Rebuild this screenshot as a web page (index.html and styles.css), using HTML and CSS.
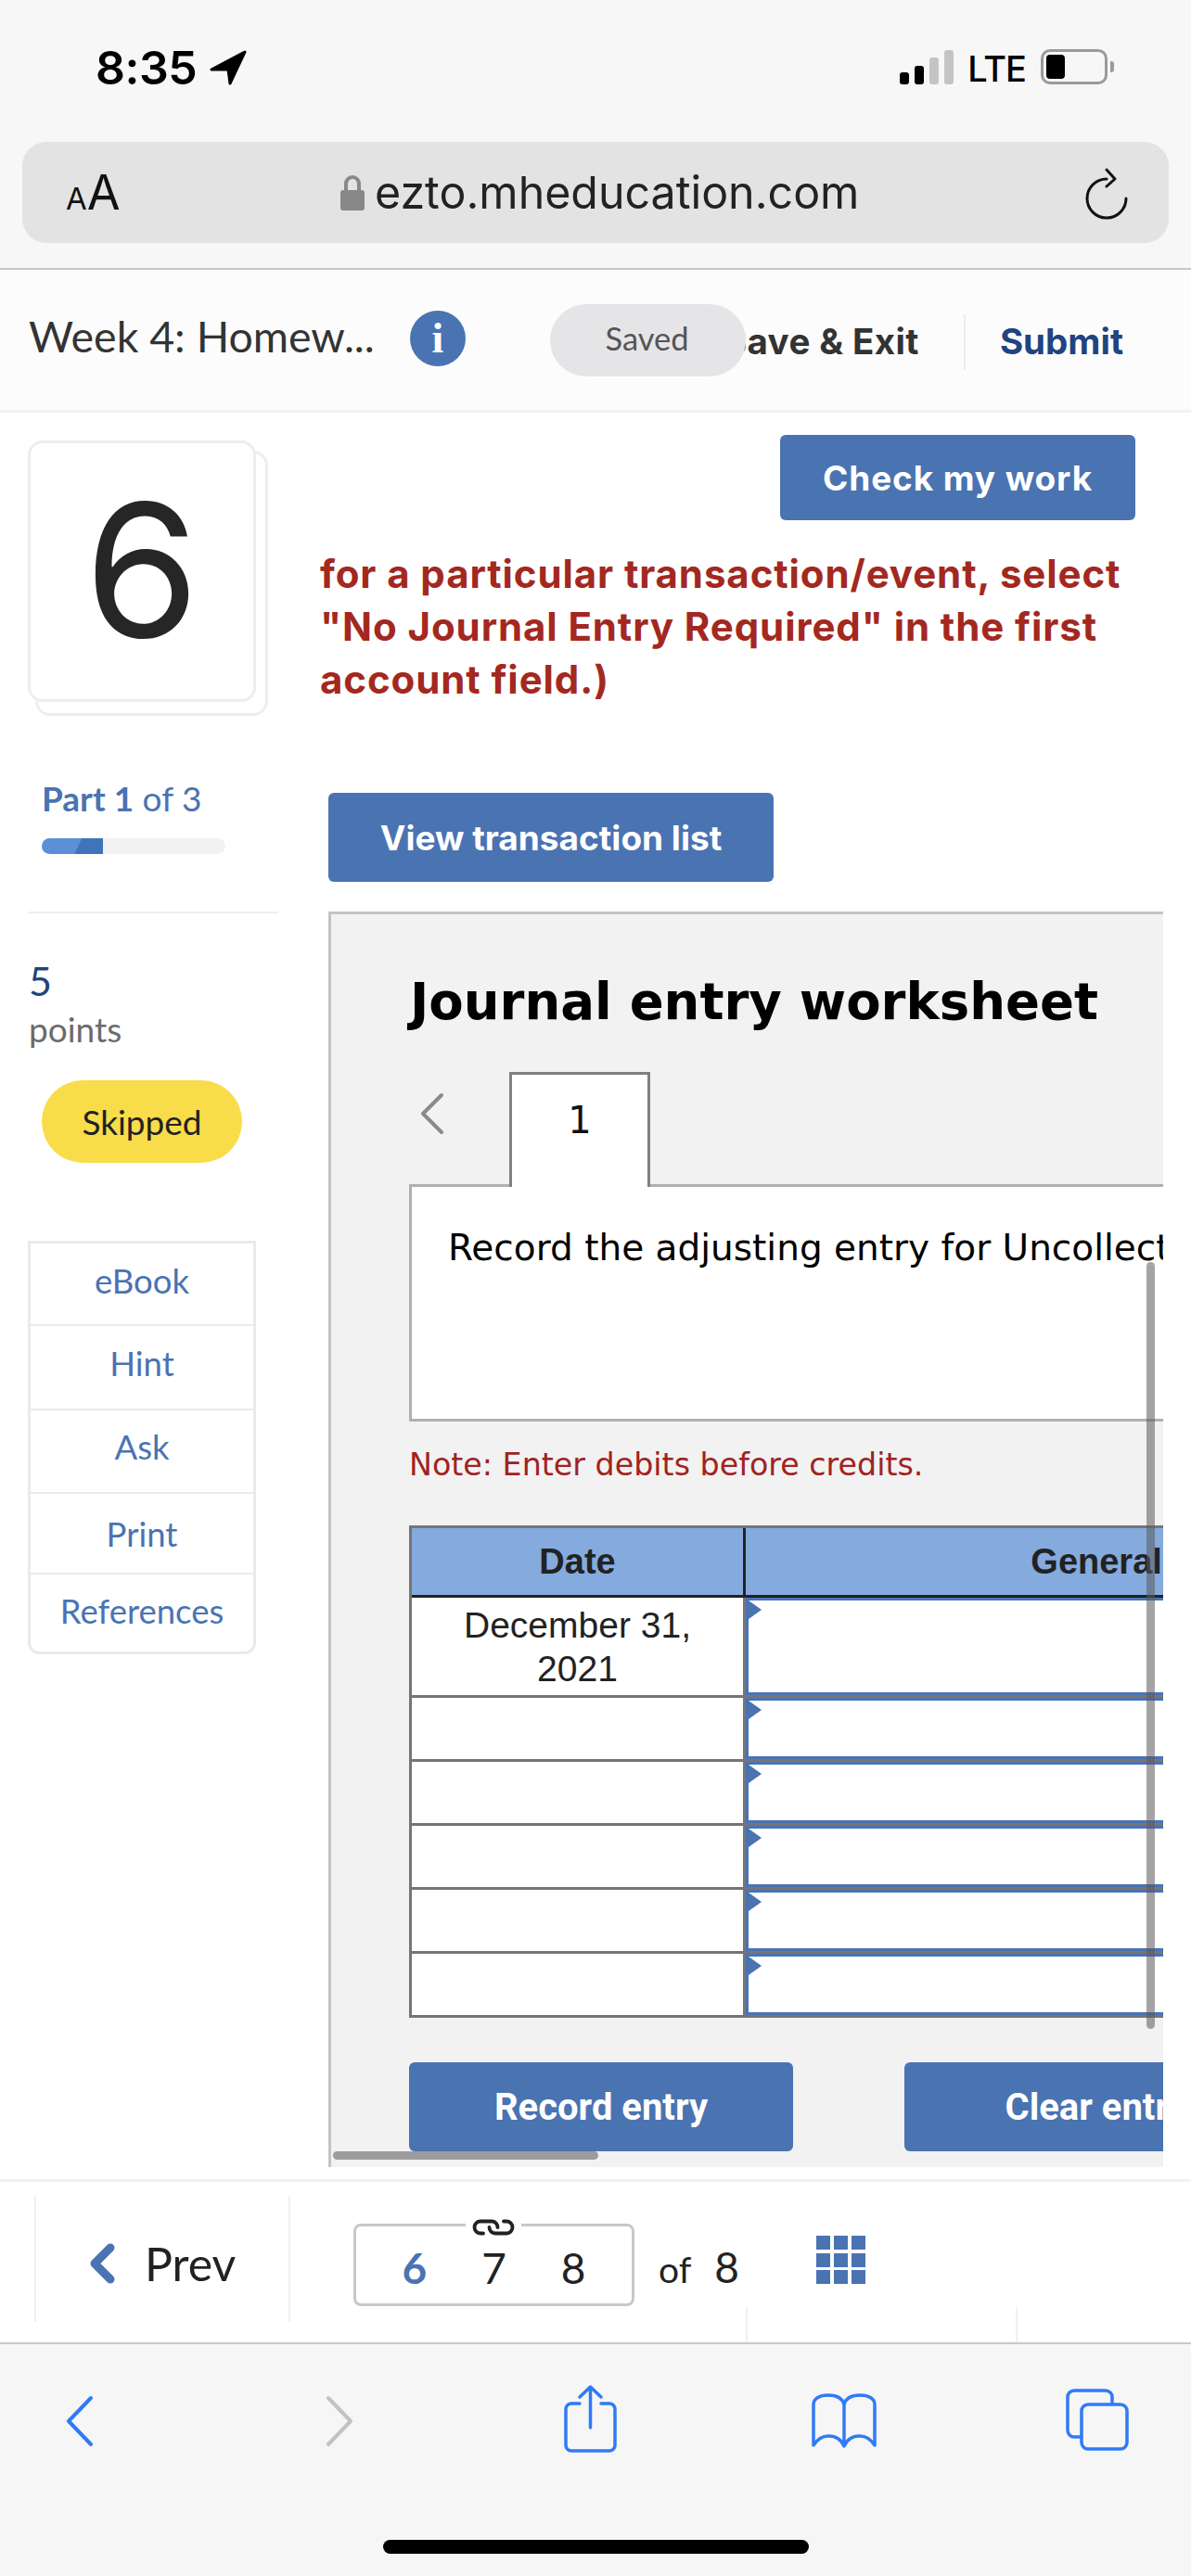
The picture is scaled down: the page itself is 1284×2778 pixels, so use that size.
FILE: index.html
```html
<!DOCTYPE html>
<html lang="en">
<head>
<meta charset="utf-8">
<title>Week 4: Homework</title>
<link rel="stylesheet" href="styles.css">
</head>
<body>
<div class="page">
  <header class="chrome">
    <div class="status">
      <div class="status-left">
        <span class="clock">8:35</span>
        <svg class="loc" viewBox="0 0 40 38"><path d="M38 2L2 21h18l2 15z" stroke="#000" stroke-width="3" stroke-linejoin="round"/></svg>
      </div>
      <div class="status-right">
        <div class="signal"><i class="b1"></i><i class="b2"></i><i class="b3"></i><i class="b4"></i></div>
        <span class="lte">LTE</span>
        <div class="battery"><i></i></div>
        <div class="nub"></div>
      </div>
    </div>
    <div class="urlbar">
      <span class="aa"><small>A</small>A</span>
      <div class="url">
        <svg class="lock" viewBox="0 0 26 38"><path d="M6 18V9a7 7 0 0 1 14 0v9" fill="none" stroke="#888" stroke-width="4"/><rect y="16" width="26" height="22" rx="3" fill="#888"/></svg>
        <span class="urltext">ezto.mheducation.com</span>
      </div>
      <svg class="reload" viewBox="0 0 46 56"><path d="M23 12A21 21 0 1 0 44 33" fill="none" stroke="#111" stroke-width="3" stroke-linecap="round"/><path d="M23 2l9 10-9 8" fill="none" stroke="#111" stroke-width="3" stroke-linecap="round" stroke-linejoin="round"/></svg>
    </div>
  </header>

  <div class="apphead">
    <span class="apptitle">Week 4: Homew...</span>
    <span class="info">i</span>
    <div class="actions">
      <span class="save">Save &amp; Exit</span>
      <span class="vsep"></span>
      <span class="submit">Submit</span>
    </div>
    <span class="saved">Saved</span>
  </div>

  <div class="content">
    <aside class="side">
      <div class="qcard"><span>6</span></div>
      <div class="part"><b>Part 1</b> of 3</div>
      <div class="progress"><div class="fill"></div></div>
      <div class="hr"></div>
      <div class="pts">5</div>
      <div class="ptslabel">points</div>
      <div class="skipped">Skipped</div>
      <nav class="tools">
        <a>eBook</a>
        <a>Hint</a>
        <a>Ask</a>
        <a>Print</a>
        <a>References</a>
      </nav>
    </aside>
    <main class="main">
      <div class="checkrow"><button class="btn check">Check my work</button></div>
      <p class="instr">for a particular transaction/event, select<br>"No Journal Entry Required" in the first<br>account field.)</p>
      <button class="btn view">View transaction list</button>
      <section class="panel">
        <h2>Journal entry worksheet</h2>
        <div class="tabs">
          <svg class="tabprev" viewBox="0 0 28 46"><path d="M24 3L4 23l20 20" fill="none" stroke="#8a8a8a" stroke-width="4" stroke-linecap="round" stroke-linejoin="round"/></svg>
          <div class="tab">1</div>
        </div>
        <div class="taskbox">Record the adjusting entry for Uncollectible Accounts.</div>
        <p class="note">Note: Enter debits before credits.</p>
        <table class="sheet">
          <thead><tr><th class="cdate">Date</th><th class="cacct">General Journal</th></tr></thead>
          <tbody>
            <tr class="first"><td class="cdate">December 31,<br>2021</td><td class="acct"><div class="field"></div></td></tr>
            <tr><td class="cdate"></td><td class="acct"><div class="field"></div></td></tr>
            <tr><td class="cdate"></td><td class="acct"><div class="field"></div></td></tr>
            <tr><td class="cdate"></td><td class="acct"><div class="field"></div></td></tr>
            <tr><td class="cdate"></td><td class="acct"><div class="field"></div></td></tr>
            <tr><td class="cdate"></td><td class="acct"><div class="field"></div></td></tr>
          </tbody>
        </table>
        <div class="entrybtns">
          <button class="btn entry">Record entry</button>
          <button class="btn entry">Clear entry</button>
        </div>
        <div class="vscroll"></div>
        <div class="hscroll"></div>
      </section>
    </main>
  </div>

  <footer class="pager">
    <div class="prevcell">
      <svg class="prevchev" viewBox="0 0 30 44"><path d="M24 5L7 22l17 17" fill="none" stroke="#4a73b2" stroke-width="9" stroke-linecap="round" stroke-linejoin="round"/></svg>
      <span>Prev</span>
    </div>
    <div class="pagebox">
      <svg class="link" viewBox="0 0 48 19"><path d="M13 16H10a6.500 6.500 0 0 1 0-13h12a6.500 6.500 0 0 1 6.500 6.500M35 3h3a6.500 6.500 0 0 1 0 13H26a6.500 6.500 0 0 1-6.500-6.500" fill="none" stroke="#222" stroke-width="3.800" stroke-linecap="round"/></svg>
      <b>6</b><span>7</span><span>8</span>
    </div>
    <div class="ofn"><small>of</small> 8</div>
    <div class="grid"><i></i><i></i><i></i><i></i><i></i><i></i><i></i><i></i><i></i></div>
    <span class="stub s1"></span>
    <span class="stub s2"></span>
  </footer>

  <div class="toolbar">
    <div class="tbicons">
      <svg class="i-back" viewBox="0 0 32 56"><path d="M28 3L4 28l24 25" fill="none" stroke="#2f7bf6" stroke-width="4" stroke-linecap="round" stroke-linejoin="round"/></svg>
      <svg class="i-fwd" viewBox="0 0 32 56"><path d="M4 3l24 25L4 53" fill="none" stroke="#c2c2c2" stroke-width="4" stroke-linecap="round" stroke-linejoin="round"/></svg>
      <svg class="i-share" viewBox="0 0 57 74"><path d="M17 21H8a6 6 0 0 0-6 6v39a6 6 0 0 0 6 6h41a6 6 0 0 0 6-6V27a6 6 0 0 0-6-6h-9M28.500 47V3M17 14L28.500 3 40 14" fill="none" stroke="#2f7bf6" stroke-width="3.500" stroke-linecap="round" stroke-linejoin="round"/></svg>
      <svg class="i-book" viewBox="0 0 70 60"><path d="M35 12C33 5 26 2 18 2 8 2 2 6 2 12v44c4-6 10-10 16-10 8 0 14 4 17 11 3-7 9-11 17-11 6 0 12 4 16 10V12c0-6-6-10-16-10-8 0-15 3-17 10v45" fill="none" stroke="#2f7bf6" stroke-width="3.500" stroke-linejoin="round"/></svg>
      <svg class="i-tabs" viewBox="0 0 68 67"><path d="M16 52H9a7 7 0 0 1-7-7V9a7 7 0 0 1 7-7h34a7 7 0 0 1 7 7v7" fill="none" stroke="#2f7bf6" stroke-width="3.500"/><rect x="17" y="17" width="49" height="48" rx="7" fill="none" stroke="#2f7bf6" stroke-width="3.500"/></svg>
    </div>
    <div class="home"></div>
  </div>
</div>
</body>
</html>
```
FILE: styles.css
```css
* { box-sizing: border-box; }
html, body { margin: 0; padding: 0; background: #fff; }
.page { width: 1284px; height: 2778px; overflow: hidden; display: flex; flex-direction: column; font-family: "Lato", "Open Sans", sans-serif; color: #222; position: relative; }

/* browser chrome */
.chrome { height: 291px; background: #f7f7f7; border-bottom: 2px solid #c8c8c8; flex: none; }
.status { height: 153px; display: flex; justify-content: space-between; padding: 48px 83px 0 103px; }
.status-left { display: flex; align-items: flex-start; gap: 14px; }
.clock { font: 600 50px/50px "Inter", sans-serif; color: #000; letter-spacing: -.5px; }
.loc { width: 40px; height: 38px; margin-top: 6px; }
.status-right { display: flex; align-items: flex-start; }
.signal { display: flex; align-items: flex-end; gap: 6px; height: 37px; margin-top: 6px; }
.signal i { display: block; width: 10px; background: #c4c4c4; border-radius: 3px; }
.signal .b1 { height: 13px; background: #000; }
.signal .b2 { height: 20px; background: #000; }
.signal .b3 { height: 29px; }
.signal .b4 { height: 37px; }
.lte { font: 500 38px/40px "Inter", sans-serif; color: #000; margin: 6px 16px 0 15px; letter-spacing: -1px; }
.battery { width: 72px; height: 38px; margin-top: 5px; border: 3px solid #9a9a9a; border-radius: 10px; padding: 3px; }
.battery i { display: block; width: 20px; height: 100%; background: #000; border-radius: 4px; }
.nub { width: 4px; height: 12px; margin: 18px 0 0 3px; background: #9a9a9a; border-radius: 0 3px 3px 0; }
.urlbar { height: 109px; margin: 0 24px; background: #e3e3e3; border-radius: 26px; display: flex; align-items: center; position: relative; padding: 0 44px 0 47px; }
.aa { font: 400 52px/1 "Inter", sans-serif; color: #111; width: 296px; }
.aa small { font-size: 33px; }
.url { display: flex; align-items: center; gap: 11px; flex: 1; font: 400 48.300px/1 "Inter", sans-serif; color: #222; }
.urltext { margin-top: 2px; }
.lock { width: 26px; height: 38px; margin-top: 2px; }
.reload { width: 46px; height: 56px; margin-top: 2px; }

/* app header */
.apphead { height: 154px; flex: none; background: #fcfcfc; border-bottom: 3px solid #f2f2f2; display: flex; align-items: center; padding: 0 73px 0 31px; position: relative; }
.apptitle { font-size: 46.500px; color: #333; margin-top: -10px; width: 373px; white-space: nowrap; }
.info { width: 60px; height: 60px; border-radius: 50%; background: #4a73b2; color: #fff; font: 700 46px/60px "Liberation Serif", serif; text-align: center; margin: -4px 0 0 38px; }
.actions { margin: 4px 0 0 auto; display: flex; align-items: center; }
.save { font: 700 38.500px/1.2 "Inter", sans-serif; letter-spacing: .4px; color: #333; }
.vsep { width: 2px; height: 60px; background: #ececec; margin: 0 37px 0 48px; }
.submit { font: 700 38.500px/1.2 "Inter", sans-serif; color: #1f4480; }
.saved { position: absolute; left: 593px; top: 37px; width: 211px; height: 78px; padding: 0 2px 5px 0; border-radius: 39px; background: #e5e5e8; color: #555; font-size: 34.500px; display: flex; align-items: center; justify-content: center; }

/* content */
.content { height: 1905px; flex: none; display: flex; overflow: hidden; background: #fff; }
.side { width: 345px; flex: none; padding: 30px 0 0 30px; }
.qcard { width: 246px; height: 282px; background: #fff; border: 3px solid #eee; border-radius: 16px; position: relative; display: flex; align-items: center; justify-content: center; font: 400 200px/1 "Inter", sans-serif; color: #262626; }
.qcard::before { content: ""; position: absolute; left: 5px; top: 8px; width: 251px; height: 286px; box-sizing: border-box; border: 3px solid #eee; border-radius: 16px; z-index: 0; }
.qcard::after { content: ""; position: absolute; inset: -3px; background: #fff; border: 3px solid #eee; border-radius: 16px; z-index: 1; }
.qcard span { position: relative; z-index: 2; margin-top: -4px; }
.part { margin: 84px 0 0 15px; font-size: 37px; line-height: 40px; color: #4a73b2; }
.progress { width: 198px; height: 17px; margin: 23px 0 0 15px; background: #f2f2f2; border-radius: 9px; overflow: hidden; }
.fill { width: 66px; height: 100%; background: linear-gradient(115deg, #5b90d6 0 58%, #3f74b9 59%); }
.hr { width: 270px; height: 2px; background: #eee; margin-top: 62px; }
.pts { margin: 51px 0 0 1px; font-size: 43px; line-height: 44px; color: #1f4480; }
.ptslabel { margin: 10px 0 0 1px; font-size: 37px; line-height: 40px; color: #6b6b6b; }
.skipped { width: 216px; height: 89px; margin: 35px 0 0 15px; border-radius: 45px; background: #f9dc4a; font-size: 37px; color: #222; display: flex; align-items: center; justify-content: center; }
.tools { width: 246px; margin-top: 84px; border: 3px solid #eaeaea; border-radius: 0 0 12px 12px; display: flex; flex-direction: column; }
.tools a { display: flex; align-items: center; justify-content: center; color: #4a73b2; font-size: 36.500px; border-bottom: 2px solid #eaeaea; }
.tools a:nth-child(1) { height: 89px; padding-bottom: 8px; }
.tools a:nth-child(2) { height: 91px; padding-bottom: 10px; }
.tools a:nth-child(3) { height: 90px; padding-bottom: 10px; }
.tools a:nth-child(4) { height: 87px; }
.tools a:nth-child(5) { height: 83px; border-bottom: 0; padding-bottom: 5px; }

.main { flex: 1; min-width: 0; position: relative; }
.checkrow { display: flex; justify-content: flex-end; padding: 24px 60px 0 0; }
.btn { border: 0; background: #4a73b2; color: #fff; border-radius: 6px; font: 700 37px/1 "Inter", sans-serif; }
.check { width: 383px; height: 92px; letter-spacing: .9px; }
.instr { margin: 29px 0 0; font: 700 42px/57px "Inter", sans-serif; letter-spacing: .9px; color: #a32820; white-space: nowrap; }
.view { display: block; width: 480px; height: 96px; margin: 94px 0 0 9px; }
.panel { position: relative; width: 900px; height: 1354px; margin: 32px 0 0 9px; border: 3px solid #c4c4c4; border-width: 3px 0 0 3px; background: #f2f2f2; overflow: hidden; padding: 0 0 0 84px; }
.panel h2 { margin: 59px 0 0 1px; font: 700 54.500px/70px "DejaVu Sans", sans-serif; color: #000; white-space: nowrap; }
.tabs { display: flex; align-items: flex-start; height: 121px; margin-top: 41px; }
.tabprev { width: 28px; height: 46px; margin: 22px 0 0 11px; }
.tab { width: 152px; height: 124px; margin-left: 69px; background: #fff; border: 3px solid #808080; border-bottom: 0; text-align: center; font: 400 40px/98px "DejaVu Sans", sans-serif; color: #111; position: relative; z-index: 1; }
.taskbox { width: 1200px; height: 256px; background: #fff; border: 3px solid #b0b0b0; padding: 36px 0 0 39px; font: 400 39px/60px "DejaVu Sans", sans-serif; color: #000; white-space: nowrap; }
.note { margin: 23px 0 0; font: 400 33.300px/48px "DejaVu Sans", sans-serif; color: #a0231f; }
.sheet { margin-top: 41px; width: 1267px; table-layout: fixed; border-collapse: separate; border-spacing: 0; border: 3px solid #757575; border-width: 3px 0 0 3px; font-family: "Liberation Sans", sans-serif; }
.sheet th { height: 75px; background: #84aade; border-bottom: 3px solid #222; font-size: 38px; color: #222; padding: 0; }
.sheet th.cdate { border-right: 3px solid #222; width: 360px; }
.sheet td { height: 69px; background: #fff; border-bottom: 3px solid #757575; padding: 0; font-size: 39px; line-height: 47px; color: #222; text-align: center; }
.sheet tr.first td { height: 108px; }
.sheet td.cdate { border-right: 3px solid #757575; }
.sheet td.acct { position: relative; }
.field { position: absolute; inset: 0; border: 3px solid #4a73b2; border-right: 0; background: #fff; }
.field::before { content: ""; position: absolute; left: 0; top: 0; border-left: 14px solid #4a73b2; border-top: 10px solid transparent; border-bottom: 10px solid transparent; }
.entrybtns { display: flex; gap: 120px; margin-top: 48px; width: 1200px; }
.entry { width: 414px; height: 96px; flex: none; padding-top: 3px; font: 700 40px/1 "Roboto", sans-serif; }
.vscroll { position: absolute; left: 879px; top: 375px; width: 9px; height: 827px; background: rgba(90,90,90,.55); border-radius: 5px; }
.hscroll { position: absolute; left: 2px; top: 1334px; width: 286px; height: 9px; background: #9c9c9c; border-radius: 5px; }

/* pager */
.pager { height: 178px; flex: none; background: #fff; border-top: 3px solid #f2f2f2; border-bottom: 2px solid #c8c8c8; display: flex; align-items: flex-start; position: relative; }
.prevcell { width: 276px; height: 136px; margin: 15px 0 0 37px; border-left: 2px solid #f0f0f0; border-right: 2px solid #f0f0f0; display: flex; align-items: center; padding: 10px 0 0 56px; gap: 31px; font-size: 50px; color: #222; }
.prevchev { width: 30px; height: 44px; }
.pagebox { position: relative; width: 303px; height: 89px; margin: 45px 0 0 68px; border: 3px solid #c8c8c8; border-radius: 8px; display: flex; align-items: center; justify-content: space-around; padding: 6px 20px 0; font-size: 46px; color: #222; }
.pagebox b { color: #4a73b2; }
.link { position: absolute; left: 118px; top: -9px; width: 60px; height: 20px; background: #fff; padding: 0 6px; }
.ofn { margin: 52px 0 0 26px; font-size: 46px; line-height: 80px; color: #222; }
.ofn small { font-size: 39px; margin-right: 13px; }
.grid { display: grid; grid-template-columns: repeat(3, 15.500px); grid-auto-rows: 15px; gap: 3.500px; margin: 58px 0 0 83px; }
.grid i { display: block; background: #4a73b2; }
.stub { position: absolute; top: 135px; bottom: 0; width: 2px; background: #f0f0f0; }
.s1 { left: 804px; }
.s2 { left: 1095px; }

/* safari toolbar */
.toolbar { flex: 1; background: #f6f6f6; position: relative; }
.tbicons { display: flex; align-items: flex-start; height: 120px; padding: 43px 0 0 70px; }
.i-back, .i-fwd { width: 32px; height: 56px; margin-top: 12px; flex: none; }
.i-fwd { margin-left: 248px; }
.i-share { width: 57px; height: 74px; margin: 0 0 0 226px; flex: none; }
.i-book { width: 70px; height: 60px; margin: 10px 0 0 210px; flex: none; }
.i-tabs { width: 68px; height: 67px; margin: 5px 0 0 204px; flex: none; }
.home { position: absolute; left: 413px; top: 211px; width: 459px; height: 15px; background: #000; border-radius: 8px; }
```
